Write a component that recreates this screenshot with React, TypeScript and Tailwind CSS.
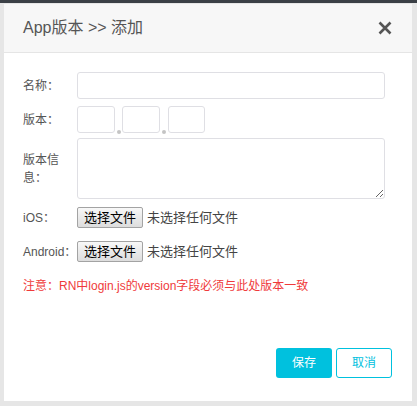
export default function App() {
  const font = { fontFamily: '"Liberation Sans", "Noto Sans CJK SC", sans-serif' }

  return (
    <div className="w-[417px] h-[406px] bg-[#e6e6e6] flex flex-col overflow-hidden" style={font}>
      <div className="h-[3px] bg-[#3b4046] shrink-0" />
      <div className="ml-[4px] mr-[5px] mt-[1px] h-[397px] bg-white flex flex-col">
        {/* header */}
        <div className="h-[49px] bg-[#f7f7f7] border-b border-[#e5e5e5] flex items-center justify-between pl-[19px] pr-[20px] shrink-0">
          <span className="text-[16px] text-[#555]">App版本 &gt;&gt; 添加</span>
          <svg width="14" height="14" viewBox="0 0 14 14" className="text-[#555]">
            <path d="M1.5 1.5 L12.5 12.5 M12.5 1.5 L1.5 12.5" stroke="currentColor" strokeWidth="2.6" strokeLinecap="butt" />
          </svg>
        </div>

        {/* form */}
        <div className="flex flex-col pl-[19px] pr-[20px] pt-[19px] text-[12px] text-[#555]">
          <div className="flex items-center">
            <label className="w-[54px] shrink-0">名称：</label>
            <input className="flex-1 mr-[7px] h-[27px] border border-[#dfdfe4] rounded-[3px] outline-none px-2" />
          </div>

          <div className="flex items-center mt-[7px]">
            <label className="w-[54px] shrink-0">版本：</label>
            <div className="flex items-end">
              <input className="w-[38px] h-[27px] border border-[#dfdfe4] rounded-[3px] outline-none" />
              <span className="w-[7px] flex justify-center mb-[-1px]">
                <span className="w-[4px] h-[4px] rounded-full bg-[#c4c4c4]" />
              </span>
              <input className="w-[38px] h-[27px] border border-[#dfdfe4] rounded-[3px] outline-none" />
              <span className="w-[8px] flex justify-center mb-[-1px]">
                <span className="w-[4px] h-[4px] rounded-full bg-[#c4c4c4]" />
              </span>
              <input className="w-[37px] h-[27px] border border-[#dfdfe4] rounded-[3px] outline-none" />
            </div>
          </div>

          <div className="flex items-center mt-[5px]">
            <label className="w-[54px] shrink-0 pr-[8px] leading-[18px]">版本信息：</label>
            <textarea className="flex-1 mr-[7px] h-[61px] border border-[#dfdfe4] rounded-[3px] outline-none" />
          </div>

          <div className="flex items-center mt-[8px]">
            <label className="w-[54px] shrink-0">iOS：</label>
            <button className="h-[21px] w-[66px] border border-[#a3a3a3] rounded-[2px] bg-gradient-to-b from-[#f8f8f8] to-[#dddddd] text-[13px] text-black">
              选择文件
            </button>
            <span className="ml-[4px] text-[13px] text-[#444]">未选择任何文件</span>
          </div>

          <div className="flex items-center mt-[13px]">
            <label className="w-[54px] shrink-0 whitespace-nowrap">Android：</label>
            <button className="h-[21px] w-[66px] border border-[#a3a3a3] rounded-[2px] bg-gradient-to-b from-[#f8f8f8] to-[#dddddd] text-[13px] text-black">
              选择文件
            </button>
            <span className="ml-[4px] text-[13px] text-[#444]">未选择任何文件</span>
          </div>

          <p className="mt-[15px] text-[12px] text-[#ef3a3a]">注意：RN中login.js的version字段必须与此处版本一致</p>

          <div className="flex justify-end gap-[4px] mt-[53px]">
            <button className="w-[56px] h-[30px] rounded-[3px] bg-[#00c1de] text-white text-[12px]">保存</button>
            <button className="w-[56px] h-[30px] rounded-[3px] border border-[#00c1de] bg-white text-[#00c1de] text-[12px]">取消</button>
          </div>
        </div>
      </div>
    </div>
  )
}
